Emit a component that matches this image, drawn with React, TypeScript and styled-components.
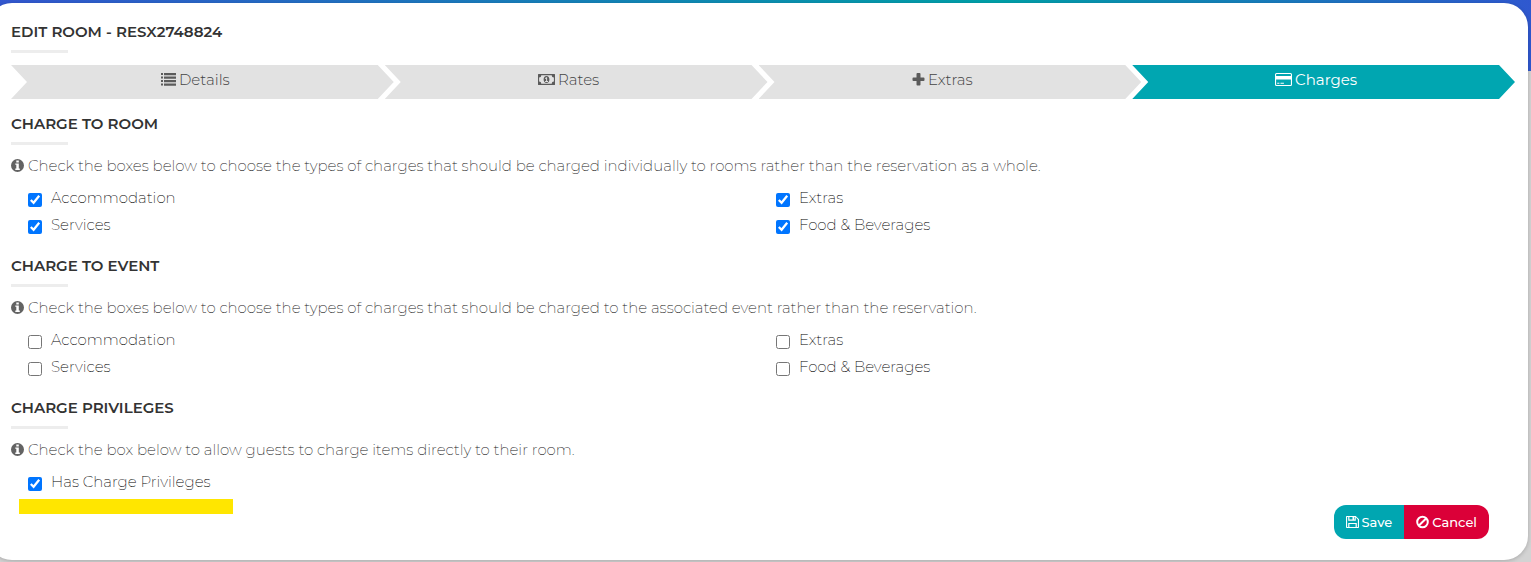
import React from 'react';
import styled, { createGlobalStyle } from 'styled-components';

const Global = createGlobalStyle`
  * { box-sizing: border-box; }
  body {
    margin: 0;
    min-height: 100vh;
    background: linear-gradient(90deg, #3357cf 0%, #00a0a8 65%, #2f58cf 100%) 0 0 / 100% 71px no-repeat #d3d3d3;
    font-family: Montserrat, Inter, "Liberation Sans", sans-serif;
    font-size: 15px;
    font-weight: 250;
    line-height: 20px;
    color: #000;
  }
  button, input { font: inherit; }
`;

const Page = styled.div`
  padding: 3px 3px 2px 0;
`;

const Panel = styled.main`
  margin-left: -12px;
  padding: 19px 13px 21px 23px;
  border-radius: 24px;
  background: #fff;
  box-shadow: 0 1px 4px rgba(0, 0, 0, 0.2);
`;

const Heading = styled.h2`
  margin: 0;
  font-size: 15px;
  line-height: 20px;
  font-weight: 600;
  color: #333;
  text-transform: uppercase;

  &::after {
    content: '';
    display: block;
    width: 57px;
    height: 3px;
    margin-top: 8px;
    background: #ededed;
  }
`;

const Steps = styled.nav`
  display: flex;
  margin: 12px 0 15px;
`;

const Step = styled.a<{ $active?: boolean }>`
  flex: 1;
  display: flex;
  justify-content: center;
  gap: 3px;
  height: 34px;
  padding: 5px 15px 0 0;
  background: ${(p) => (p.$active ? '#00a6b1' : '#e2e2e2')};
  color: ${(p) => (p.$active ? '#fff' : '#444')};
  font-weight: ${(p) => (p.$active ? 400 : 300)};
  text-decoration: none;
  clip-path: polygon(0 0, calc(100% - 16px) 0, 100% 50%, calc(100% - 16px) 100%, 0 100%, 16px 50%);

  & + & { margin-left: -9px; }
`;

const Section = styled.section`
  & + & { margin-top: 21px; }
`;

const Note = styled.p`
  display: flex;
  gap: 4px;
  margin: 11px 0 10px;
  color: #222;
`;

const Options = styled.div`
  display: grid;
  grid-template-columns: 1fr 1fr;
  row-gap: 7px;
  padding: 2px 8px 0 0;
`;

const Option = styled.label`
  display: flex;
  align-items: center;
  gap: 9px;
  padding-left: 17px;
`;

const Check = styled.input`
  width: 14px;
  height: 14px;
  margin: 3px 0 0;
  accent-color: #0075ff;
`;

const Highlight = styled.div`
  width: 214px;
  height: 15px;
  margin: 7px 0 0 8px;
  background: #ffe600;
`;

const Actions = styled.div`
  display: flex;
  justify-content: flex-end;
  margin: -9px 26px 0 0;
`;

const Action = styled.button<{ $danger?: boolean }>`
  display: flex;
  align-items: center;
  gap: 3px;
  height: 34px;
  padding: 0 12px;
  border: 0;
  border-radius: ${(p) => (p.$danger ? '0 12px 12px 0' : '12px 0 0 12px')};
  background: ${(p) => (p.$danger ? '#db0038' : '#00a6b1')};
  color: #fff;
  font-size: 13px;
  font-weight: 500;
`;

const Svg = styled.svg`
  flex: none;
  height: 20px;
  fill: currentColor;
`;

const ListIcon = () => (
  <Svg width="16" viewBox="0 0 16 20" opacity="0.85">
    <path d="M1 3h2v2H1zM1 6.500h2v2H1zM1 10h2v2H1zM1 13.500h2v2H1zM4 3h12v2.300H4zM4 6.500h12v2.300H4zM4 10h12v2.300H4zM4 13.500h12v2.300H4z" />
  </Svg>
);

const MoneyIcon = () => (
  <Svg width="17" viewBox="0 0 17 20" opacity="0.85">
    <path fillRule="evenodd" d="M.5 4h16q.5 0 .5.500v10q0 .5-.5.500H.5q-.5 0-.5-.5v-10Q0 4 .5 4zM3.300 5.200a2.200 2.200 0 0 1-2.200 2.200v4.200a2.200 2.200 0 0 1 2.200 2.200h10.400a2.200 2.200 0 0 1 2.200-2.200V7.400a2.200 2.200 0 0 1-2.200-2.200z" />
    <path fillRule="evenodd" d="M8.500 5.900c1.900 0 2.900 1.700 2.900 3.600s-1 3.600-2.900 3.600-2.900-1.700-2.900-3.600 1-3.600 2.900-3.600zM8.200 7.200L6.900 8.300l.5.700.7-.5v2.600H7.100v.9h2.900v-.9H9.100V7.200z" />
  </Svg>
);

const PlusIcon = () => (
  <Svg width="13" viewBox="0 0 13 20" opacity="0.85">
    <path d="M5.400 3h2.200q.9 0 .9.900V7.500h3.100q.9 0 .9.900v1.700q0 .9-.9.900H8.500v3.600q0 .9-.9.900H5.400q-.9 0-.9-.9V11H1.400q-.9 0-.9-.9V8.400q0-.9.900-.9h3.100V3.900q0-.9.900-.9z" />
  </Svg>
);

const CardIcon = () => (
  <Svg width="17" viewBox="0 0 17 20">
    <path fillRule="evenodd" d="M1.500 3h14Q17 3 17 4.500v10q0 1.500-1.500 1.500h-14Q0 16 0 14.500v-10Q0 3 1.500 3zm0 1.100q-.4 0-.4.400V6h14.800V4.500q0-.4-.4-.4zM1.100 9.500v5q0 .4.400.4h14q.4 0 .4-.4v-5zM2.200 12.700h2.200v1.100H2.200zM5.500 12.700h3.400v1.100H5.500z" />
  </Svg>
);

const InfoIcon = () => (
  <Svg width="13" viewBox="0 0 13 20" opacity="0.7">
    <path fillRule="evenodd" d="M6.500 3a6.500 6.500 0 1 1 0 13 6.500 6.500 0 0 1 0-13zM5.300 4.500v1.900h2.500V4.500zM4.300 7.500v1.300h1v3.700h-1v1.500h4.500v-1.500h-1V7.500z" />
  </Svg>
);

const SaveIcon = () => (
  <Svg width="13" viewBox="0 0 13 20">
    <path fillRule="evenodd" d="M.8 4h8.900L13 7.200v8q0 .8-.8.800H.8Q0 16 0 15.200V4.800Q0 4 .8 4zM1.100 5.100v9.800h1.100v-4h8.600v4h1.100V7.700L9.800 5.200v3.500H2.200V5.100zM3.400 5.100v2.500h5.200V5.100zM3.400 12v2.900h6.200V12zM6.500 5.100H8v2.500H6.500z" />
  </Svg>
);

const BanIcon = () => (
  <Svg width="13" viewBox="0 0 13 20">
    <circle cx="6.500" cy="10" r="5.300" fill="none" stroke="currentColor" strokeWidth="2" />
    <path d="M2.700 13.800L10.300 6.200" stroke="currentColor" strokeWidth="2" />
  </Svg>
);

const CHARGES = ['Accommodation', 'Extras', 'Services', 'Food & Beverages'];

interface ChargeSectionProps {
  title: string;
  note: string;
  options: string[];
  checked?: boolean;
}

const ChargeSection = ({ title, note, options, checked }: ChargeSectionProps) => (
  <Section>
    <Heading>{title}</Heading>
    <Note><InfoIcon />{note}</Note>
    <Options>
      {options.map((name) => (
        <Option key={name}>
          <Check type="checkbox" defaultChecked={checked} />
          {name}
        </Option>
      ))}
    </Options>
  </Section>
);

export default function App() {
  return (
    <Page>
      <Global />
      <Panel>
        <Heading as="h1">Edit Room - RESX2748824</Heading>
        <Steps>
          <Step href="#details"><ListIcon />Details</Step>
          <Step href="#rates"><MoneyIcon />Rates</Step>
          <Step href="#extras"><PlusIcon />Extras</Step>
          <Step href="#charges" $active aria-current="step"><CardIcon />Charges</Step>
        </Steps>
        <ChargeSection
          title="Charge to Room"
          note="Check the boxes below to choose the types of charges that should be charged individually to rooms rather than the reservation as a whole."
          options={CHARGES}
          checked
        />
        <ChargeSection
          title="Charge to Event"
          note="Check the boxes below to choose the types of charges that should be charged to the associated event rather than the reservation."
          options={CHARGES}
        />
        <ChargeSection
          title="Charge Privileges"
          note="Check the box below to allow guests to charge items directly to their room."
          options={['Has Charge Privileges']}
          checked
        />
        <Highlight />
        <Actions>
          <Action type="button"><SaveIcon />Save</Action>
          <Action type="button" $danger><BanIcon />Cancel</Action>
        </Actions>
      </Panel>
    </Page>
  );
}
